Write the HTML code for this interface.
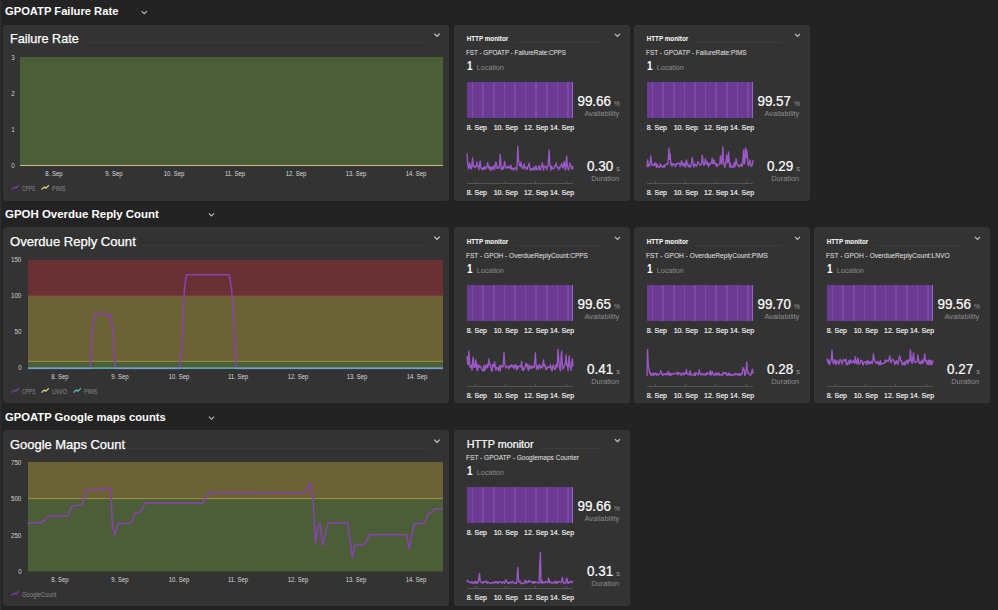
<!DOCTYPE html>
<html><head><meta charset="utf-8"><style>
html,body{margin:0;padding:0;}
body{width:998px;height:610px;overflow:hidden;background:#232323;position:relative;font-family:"Liberation Sans", sans-serif;}
.t{position:absolute;white-space:nowrap;line-height:1;}
.r{position:absolute;}
</style></head><body>
<svg class="r" style="left:0;top:0" width="4" height="610"><rect x="0" y="0" width="1.5" height="610" fill="#2d2d2d"/></svg>
<div class="t" style="left:5.00px;top:6.00px;font-size:11.2px;color:#ffffff;font-weight:700;">GPOATP Failure Rate</div>
<svg class="r" style="left:0;top:0" width="998" height="610"><polyline points="141.70,11.10 144.30,13.70 146.90,11.10" fill="none" stroke="#bdbdbd" stroke-width="1.1"/></svg>
<div class="t" style="left:5.00px;transform:scaleX(1.023);transform-origin:0 0;top:209.00px;font-size:11.2px;color:#ffffff;font-weight:700;">GPOH Overdue Reply Count</div>
<svg class="r" style="left:0;top:0" width="998" height="610"><polyline points="208.90,213.30 211.50,215.90 214.10,213.30" fill="none" stroke="#bdbdbd" stroke-width="1.1"/></svg>
<div class="t" style="left:5.00px;transform:scaleX(1.005);transform-origin:0 0;top:412.00px;font-size:11.2px;color:#ffffff;font-weight:700;">GPOATP Google maps counts</div>
<svg class="r" style="left:0;top:0" width="998" height="610"><polyline points="208.90,416.70 211.50,419.30 214.10,416.70" fill="none" stroke="#bdbdbd" stroke-width="1.1"/></svg>
<svg class="r" style="left:0;top:0" width="998" height="610"><rect x="2.8" y="24.5" width="446.5" height="176.7" rx="3.5" fill="#1e1e1e" opacity="0.6"/><rect x="3.3" y="25.0" width="445.5" height="175.7" rx="3" fill="#333333"/><rect x="3.8" y="25.5" width="444.5" height="174.7" rx="2.5" fill="none" stroke="#383838" stroke-width="1"/></svg>
<div class="t" style="left:10.30px;transform:scaleX(0.97);transform-origin:0 0;top:32.00px;font-size:13px;color:#ffffff;font-weight:400;-webkit-text-stroke:0.25px #fff;">Failure Rate</div>
<div class="r" style="left:85px;top:42px;width:343px;height:1px;background:#3b3b3b;"></div>
<svg class="r" style="left:0;top:0" width="998" height="610"><polyline points="434.30,33.65 437.00,36.35 439.70,33.65" fill="none" stroke="#cfcfcf" stroke-width="1.2"/></svg>
<svg class="r" style="left:0;top:0" width="998" height="610"><rect x="20" y="57" width="423" height="109" fill="#4b5e38"/><polyline points="20.0,165.5 443.0,165.5" fill="none" stroke="#c9bb86" stroke-width="1.0" stroke-linejoin="round"/></svg>
<div class="t" style="right:983.00px;transform:scaleX(0.92);transform-origin:100% 0;top:55.00px;font-size:6.8px;color:#cfcfcf;font-weight:400;">3</div>
<div class="t" style="right:983.00px;transform:scaleX(0.92);transform-origin:100% 0;top:91.00px;font-size:6.8px;color:#cfcfcf;font-weight:400;">2</div>
<div class="t" style="right:983.00px;transform:scaleX(0.92);transform-origin:100% 0;top:127.00px;font-size:6.8px;color:#cfcfcf;font-weight:400;">1</div>
<div class="t" style="right:983.00px;transform:scaleX(0.92);transform-origin:100% 0;top:163.00px;font-size:6.8px;color:#cfcfcf;font-weight:400;">0</div>
<div class="t" style="left:54.00px;transform:translateX(-50%) scaleX(0.88);transform-origin:50% 0;top:171.00px;font-size:6.8px;color:#d8d8d8;font-weight:400;">8. Sep</div>
<div class="t" style="left:114.00px;transform:translateX(-50%) scaleX(0.88);transform-origin:50% 0;top:171.00px;font-size:6.8px;color:#d8d8d8;font-weight:400;">9. Sep</div>
<div class="t" style="left:174.00px;transform:translateX(-50%) scaleX(0.88);transform-origin:50% 0;top:171.00px;font-size:6.8px;color:#d8d8d8;font-weight:400;">10. Sep</div>
<div class="t" style="left:235.00px;transform:translateX(-50%) scaleX(0.88);transform-origin:50% 0;top:171.00px;font-size:6.8px;color:#d8d8d8;font-weight:400;">11. Sep</div>
<div class="t" style="left:296.00px;transform:translateX(-50%) scaleX(0.88);transform-origin:50% 0;top:171.00px;font-size:6.8px;color:#d8d8d8;font-weight:400;">12. Sep</div>
<div class="t" style="left:356.00px;transform:translateX(-50%) scaleX(0.88);transform-origin:50% 0;top:171.00px;font-size:6.8px;color:#d8d8d8;font-weight:400;">13. Sep</div>
<div class="t" style="left:416.00px;transform:translateX(-50%) scaleX(0.88);transform-origin:50% 0;top:171.00px;font-size:6.8px;color:#d8d8d8;font-weight:400;">14. Sep</div>
<svg class="r" style="left:0;top:0" width="998" height="610"><polyline points="11.4,189.6 14.2,187.1 15.8,188.1 18.9,185.3" fill="none" stroke="#7d3caa" stroke-width="1.25"/></svg>
<div class="t" style="left:21.60px;transform:scaleX(0.769);transform-origin:0 0;top:186.00px;font-size:6.4px;color:#8a8a8a;font-weight:400;">CPPS</div>
<svg class="r" style="left:0;top:0" width="998" height="610"><polyline points="41.4,189.6 44.2,187.1 45.8,188.1 48.9,185.3" fill="none" stroke="#dcd07c" stroke-width="1.25"/></svg>
<div class="t" style="left:51.60px;transform:scaleX(0.869);transform-origin:0 0;top:186.00px;font-size:6.4px;color:#8a8a8a;font-weight:400;">PIMS</div>
<svg class="r" style="left:0;top:0" width="998" height="610"><rect x="2.8" y="226.9" width="446.5" height="176.7" rx="3.5" fill="#1e1e1e" opacity="0.6"/><rect x="3.3" y="227.4" width="445.5" height="175.7" rx="3" fill="#333333"/><rect x="3.8" y="227.9" width="444.5" height="174.7" rx="2.5" fill="none" stroke="#383838" stroke-width="1"/></svg>
<div class="t" style="left:10.30px;transform:scaleX(1.006);transform-origin:0 0;top:235.00px;font-size:13px;color:#ffffff;font-weight:400;-webkit-text-stroke:0.25px #fff;">Overdue Reply Count</div>
<div class="r" style="left:142px;top:245px;width:286px;height:1px;background:#3b3b3b;"></div>
<svg class="r" style="left:0;top:0" width="998" height="610"><polyline points="434.30,236.65 437.00,239.35 439.70,236.65" fill="none" stroke="#cfcfcf" stroke-width="1.2"/></svg>
<svg class="r" style="left:0;top:0" width="998" height="610"><rect x="28" y="260" width="415" height="36" fill="#6a3135"/><rect x="28" y="296" width="415" height="65" fill="#6b6336"/><rect x="28" y="361" width="415" height="7.5" fill="#4b5e38"/><polyline points="28.0,296.0 443.0,296.0" fill="none" stroke="#9a4a3a" stroke-width="0.8" stroke-linejoin="round"/><polyline points="28.0,361.3 443.0,361.3" fill="none" stroke="#a89a3c" stroke-width="0.9" stroke-linejoin="round"/><polyline points="28.0,368.4 90.2,368.4 92.2,329.8 95.3,314.0 102.6,314.0 104.6,314.8 110.1,314.8 112.5,326.8 115.0,368.4 116.4,368.4 179.4,368.4 181.9,344.5 184.3,290.4 186.3,274.7 229.0,274.7 231.5,287.5 236.4,368.4 443.0,368.4" fill="none" stroke="#8a41b2" stroke-width="1.5" stroke-linejoin="round"/><polyline points="28.0,368.2 443.0,368.2" fill="none" stroke="#62c6cc" stroke-width="1.3" stroke-linejoin="round"/></svg>
<div class="t" style="right:976.60px;transform:scaleX(0.92);transform-origin:100% 0;top:257.00px;font-size:6.8px;color:#cfcfcf;font-weight:400;">150</div>
<div class="t" style="right:976.60px;transform:scaleX(0.92);transform-origin:100% 0;top:293.00px;font-size:6.8px;color:#cfcfcf;font-weight:400;">100</div>
<div class="t" style="right:976.60px;transform:scaleX(0.92);transform-origin:100% 0;top:329.00px;font-size:6.8px;color:#cfcfcf;font-weight:400;">50</div>
<div class="t" style="right:976.60px;transform:scaleX(0.92);transform-origin:100% 0;top:365.00px;font-size:6.8px;color:#cfcfcf;font-weight:400;">0</div>
<div class="t" style="left:60.00px;transform:translateX(-50%) scaleX(0.88);transform-origin:50% 0;top:374.00px;font-size:6.8px;color:#d8d8d8;font-weight:400;">8. Sep</div>
<div class="t" style="left:119.50px;transform:translateX(-50%) scaleX(0.88);transform-origin:50% 0;top:374.00px;font-size:6.8px;color:#d8d8d8;font-weight:400;">9. Sep</div>
<div class="t" style="left:179.00px;transform:translateX(-50%) scaleX(0.88);transform-origin:50% 0;top:374.00px;font-size:6.8px;color:#d8d8d8;font-weight:400;">10. Sep</div>
<div class="t" style="left:238.00px;transform:translateX(-50%) scaleX(0.88);transform-origin:50% 0;top:374.00px;font-size:6.8px;color:#d8d8d8;font-weight:400;">11. Sep</div>
<div class="t" style="left:297.60px;transform:translateX(-50%) scaleX(0.88);transform-origin:50% 0;top:374.00px;font-size:6.8px;color:#d8d8d8;font-weight:400;">12. Sep</div>
<div class="t" style="left:357.00px;transform:translateX(-50%) scaleX(0.88);transform-origin:50% 0;top:374.00px;font-size:6.8px;color:#d8d8d8;font-weight:400;">13. Sep</div>
<div class="t" style="left:417.00px;transform:translateX(-50%) scaleX(0.88);transform-origin:50% 0;top:374.00px;font-size:6.8px;color:#d8d8d8;font-weight:400;">14. Sep</div>
<svg class="r" style="left:0;top:0" width="998" height="610"><polyline points="11.4,392.6 14.2,390.1 15.8,391.1 18.9,388.3" fill="none" stroke="#7d3caa" stroke-width="1.25"/></svg>
<div class="t" style="left:21.60px;transform:scaleX(0.769);transform-origin:0 0;top:389.00px;font-size:6.4px;color:#8a8a8a;font-weight:400;">CPPS</div>
<svg class="r" style="left:0;top:0" width="998" height="610"><polyline points="41.4,392.6 44.2,390.1 45.8,391.1 48.9,388.3" fill="none" stroke="#dcd07c" stroke-width="1.25"/></svg>
<div class="t" style="left:51.60px;transform:scaleX(0.872);transform-origin:0 0;top:389.00px;font-size:6.4px;color:#8a8a8a;font-weight:400;">LNVO</div>
<svg class="r" style="left:0;top:0" width="998" height="610"><polyline points="73.4,392.6 76.2,390.1 77.8,391.1 80.9,388.3" fill="none" stroke="#4fc0cc" stroke-width="1.25"/></svg>
<div class="t" style="left:83.60px;transform:scaleX(0.869);transform-origin:0 0;top:389.00px;font-size:6.4px;color:#8a8a8a;font-weight:400;">PIMS</div>
<svg class="r" style="left:0;top:0" width="998" height="610"><rect x="2.8" y="429.7" width="446.5" height="176.7" rx="3.5" fill="#1e1e1e" opacity="0.6"/><rect x="3.3" y="430.2" width="445.5" height="175.7" rx="3" fill="#333333"/><rect x="3.8" y="430.7" width="444.5" height="174.7" rx="2.5" fill="none" stroke="#383838" stroke-width="1"/></svg>
<div class="t" style="left:10.30px;transform:scaleX(0.995);transform-origin:0 0;top:438.00px;font-size:13px;color:#ffffff;font-weight:400;-webkit-text-stroke:0.25px #fff;">Google Maps Count</div>
<div class="r" style="left:130px;top:448px;width:298px;height:1px;background:#3b3b3b;"></div>
<svg class="r" style="left:0;top:0" width="998" height="610"><polyline points="434.30,439.65 437.00,442.35 439.70,439.65" fill="none" stroke="#cfcfcf" stroke-width="1.2"/></svg>
<svg class="r" style="left:0;top:0" width="998" height="610"><rect x="28" y="462" width="415" height="36.69999999999999" fill="#6b6336"/><rect x="28" y="498.7" width="415" height="72.80000000000001" fill="#4b5e38"/><polyline points="28.0,498.6 443.0,498.6" fill="none" stroke="#a89a3c" stroke-width="0.9" stroke-linejoin="round"/><polyline points="27.4,523.4 32.6,522.8 41.0,522.8 44.2,520.7 48.4,516.0 68.0,516.0 70.5,508.7 73.7,505.5 81.0,504.9 83.1,503.4 85.7,491.8 88.4,489.7 102.1,489.7 105.2,488.2 110.5,488.2 112.6,527.6 115.1,535.0 117.9,523.4 129.4,523.4 132.0,521.3 135.1,512.9 140.0,512.2 145.2,503.0 203.1,503.0 204.8,499.6 209.4,492.5 305.4,492.7 308.0,486.2 310.1,482.6 312.9,498.1 315.5,542.9 317.9,526.1 320.0,523.5 322.6,545.0 328.0,523.1 337.7,523.1 347.4,522.2 352.4,557.3 354.9,545.0 364.6,544.4 369.6,534.7 406.6,534.7 409.2,549.1 414.2,523.5 423.9,523.5 428.2,513.6 431.4,512.1 434.2,508.9 442.8,508.9" fill="none" stroke="#8a41b2" stroke-width="1.5" stroke-linejoin="round"/></svg>
<div class="t" style="right:976.60px;transform:scaleX(0.92);transform-origin:100% 0;top:460.00px;font-size:6.8px;color:#cfcfcf;font-weight:400;">750</div>
<div class="t" style="right:976.60px;transform:scaleX(0.92);transform-origin:100% 0;top:496.00px;font-size:6.8px;color:#cfcfcf;font-weight:400;">500</div>
<div class="t" style="right:976.60px;transform:scaleX(0.92);transform-origin:100% 0;top:533.00px;font-size:6.8px;color:#cfcfcf;font-weight:400;">250</div>
<div class="t" style="right:976.60px;transform:scaleX(0.92);transform-origin:100% 0;top:569.00px;font-size:6.8px;color:#cfcfcf;font-weight:400;">0</div>
<div class="t" style="left:60.00px;transform:translateX(-50%) scaleX(0.88);transform-origin:50% 0;top:577.00px;font-size:6.8px;color:#d8d8d8;font-weight:400;">8. Sep</div>
<div class="t" style="left:119.50px;transform:translateX(-50%) scaleX(0.88);transform-origin:50% 0;top:577.00px;font-size:6.8px;color:#d8d8d8;font-weight:400;">9. Sep</div>
<div class="t" style="left:179.00px;transform:translateX(-50%) scaleX(0.88);transform-origin:50% 0;top:577.00px;font-size:6.8px;color:#d8d8d8;font-weight:400;">10. Sep</div>
<div class="t" style="left:238.00px;transform:translateX(-50%) scaleX(0.88);transform-origin:50% 0;top:577.00px;font-size:6.8px;color:#d8d8d8;font-weight:400;">11. Sep</div>
<div class="t" style="left:297.60px;transform:translateX(-50%) scaleX(0.88);transform-origin:50% 0;top:577.00px;font-size:6.8px;color:#d8d8d8;font-weight:400;">12. Sep</div>
<div class="t" style="left:356.00px;transform:translateX(-50%) scaleX(0.88);transform-origin:50% 0;top:577.00px;font-size:6.8px;color:#d8d8d8;font-weight:400;">13. Sep</div>
<div class="t" style="left:416.00px;transform:translateX(-50%) scaleX(0.88);transform-origin:50% 0;top:577.00px;font-size:6.8px;color:#d8d8d8;font-weight:400;">14. Sep</div>
<svg class="r" style="left:0;top:0" width="998" height="610"><polyline points="11.4,595.6 14.2,593.1 15.8,594.1 18.9,591.3" fill="none" stroke="#7d3caa" stroke-width="1.25"/></svg>
<div class="t" style="left:21.60px;transform:scaleX(0.915);transform-origin:0 0;top:592.00px;font-size:6.4px;color:#8a8a8a;font-weight:400;">GoogleCount</div>
<svg class="r" style="left:0;top:0" width="998" height="610"><rect x="453.5" y="24.5" width="177" height="176.7" rx="3.5" fill="#1e1e1e" opacity="0.6"/><rect x="454" y="25.0" width="176" height="175.7" rx="3" fill="#333333"/><rect x="454.5" y="25.5" width="175" height="174.7" rx="2.5" fill="none" stroke="#383838" stroke-width="1"/></svg>
<div class="t" style="left:466.70px;top:36.00px;font-size:6.3px;color:#ffffff;font-weight:700;">HTTP monitor</div>
<div class="r" style="left:514px;top:42px;width:89px;height:1px;background:#3c3c3c;"></div>
<svg class="r" style="left:0;top:0" width="998" height="610"><polyline points="615.00,33.95 617.50,36.45 620.00,33.95" fill="none" stroke="#c8c8c8" stroke-width="1.1"/></svg>
<div class="t" style="left:466.40px;transform:scaleX(0.899);transform-origin:0 0;top:49.00px;font-size:7.0px;color:#e6e6e6;font-weight:400;">FST - GPOATP - FailureRate:CPPS</div>
<div class="t" style="left:466.50px;transform:scaleX(0.8);transform-origin:0 0;top:60.00px;font-size:12.4px;color:#ffffff;font-weight:700;">1</div>
<div class="t" style="left:476.70px;top:64.00px;font-size:7.2px;color:#8c8c8c;font-weight:400;">Location</div>
<div class="r" style="left:467px;top:82px;width:106px;height:36px;background:#6b3a92;"></div>
<div class="r" style="left:471.8px;top:82px;width:1.5px;height:36px;background:#7b4aa3;"></div>
<div class="r" style="left:482.4px;top:82px;width:1.5px;height:36px;background:#7b4aa3;"></div>
<div class="r" style="left:493.0px;top:82px;width:1.5px;height:36px;background:#7b4aa3;"></div>
<div class="r" style="left:503.6px;top:82px;width:1.5px;height:36px;background:#7b4aa3;"></div>
<div class="r" style="left:514.2px;top:82px;width:1.5px;height:36px;background:#7b4aa3;"></div>
<div class="r" style="left:524.8px;top:82px;width:1.5px;height:36px;background:#7b4aa3;"></div>
<div class="r" style="left:535.4px;top:82px;width:1.5px;height:36px;background:#7b4aa3;"></div>
<div class="r" style="left:546.0px;top:82px;width:1.5px;height:36px;background:#7b4aa3;"></div>
<div class="r" style="left:556.6px;top:82px;width:1.5px;height:36px;background:#7b4aa3;"></div>
<div class="r" style="left:567.2px;top:82px;width:1.5px;height:36px;background:#7b4aa3;"></div>
<div class="r" style="left:571.5px;top:82px;width:1.5px;height:36px;background:#9a63c6;"></div>
<div class="t" style="right:386.60px;transform:scaleX(0.96);transform-origin:100% 0;top:94.00px;font-size:14px;color:#ffffff;font-weight:400;-webkit-text-stroke:0.2px #fff;">99.66</div>
<div class="t" style="left:613.60px;transform:scaleX(0.9);transform-origin:0 0;top:100.00px;font-size:7.4px;color:#9a9a9a;font-weight:400;">%</div>
<div class="t" style="right:378.80px;top:110.00px;font-size:7.4px;color:#8c8c8c;font-weight:400;">Availability</div>
<div class="t" style="left:466.70px;top:124.00px;font-size:7.0px;color:#f2f2f2;font-weight:400;-webkit-text-stroke:0.15px #fff;">8. Sep</div>
<div class="t" style="left:493.70px;top:124.00px;font-size:7.0px;color:#f2f2f2;font-weight:400;-webkit-text-stroke:0.15px #fff;">10. Sep</div>
<div class="t" style="left:524.10px;top:124.00px;font-size:7.0px;color:#f2f2f2;font-weight:400;-webkit-text-stroke:0.15px #fff;">12. Sep</div>
<div class="t" style="left:549.90px;top:124.00px;font-size:7.0px;color:#f2f2f2;font-weight:400;-webkit-text-stroke:0.15px #fff;">14. Sep</div>
<svg class="r" style="left:0;top:0" width="998" height="610"><polyline points="467.0,153.4 467.6,163.6 468.3,168.0 468.9,168.7 469.5,162.8 470.1,167.7 470.8,165.7 471.4,169.0 472.0,163.4 472.6,158.0 473.3,166.6 473.9,166.7 474.5,165.8 475.2,167.7 475.8,166.8 476.4,165.9 477.0,162.0 477.7,166.4 478.3,166.6 478.9,169.7 479.5,164.5 480.2,161.0 480.8,167.2 481.4,168.8 482.1,168.4 482.7,169.6 483.3,167.4 483.9,169.4 484.6,166.5 485.2,168.9 485.8,167.4 486.4,168.0 487.1,166.3 487.7,162.5 488.3,166.3 489.0,168.4 489.6,166.5 490.2,170.2 490.8,168.2 491.5,166.8 492.1,170.1 492.7,167.8 493.3,168.2 494.0,165.7 494.6,169.5 495.2,165.8 495.9,162.0 496.5,164.2 497.1,168.3 497.7,168.0 498.4,167.3 499.0,168.2 499.6,164.8 500.2,154.5 500.9,163.0 501.5,169.7 502.1,169.4 502.8,166.9 503.4,168.7 504.0,165.8 504.6,161.4 505.3,166.2 505.9,168.1 506.5,167.0 507.1,167.8 507.8,166.3 508.4,167.6 509.0,166.2 509.7,168.0 510.3,168.5 510.9,165.2 511.5,169.0 512.2,168.9 512.8,168.2 513.4,170.2 514.0,168.1 514.7,168.7 515.3,168.3 515.9,167.4 516.6,170.2 517.2,163.8 517.8,146.5 518.4,159.2 519.1,163.3 519.7,165.9 520.3,166.6 520.9,162.0 521.6,165.8 522.2,168.0 522.8,167.3 523.4,168.8 524.1,163.9 524.7,167.1 525.3,167.2 526.0,169.0 526.6,167.2 527.2,169.3 527.8,166.7 528.5,166.0 529.1,163.0 529.7,167.0 530.3,170.2 531.0,168.4 531.6,169.9 532.2,169.2 532.9,169.6 533.5,167.3 534.1,169.7 534.7,170.1 535.4,166.3 536.0,165.9 536.6,169.7 537.2,169.5 537.9,168.5 538.5,167.4 539.1,165.7 539.8,169.8 540.4,170.0 541.0,167.0 541.6,166.8 542.3,162.6 542.9,165.9 543.5,170.2 544.1,166.2 544.8,166.8 545.4,166.2 546.0,167.4 546.7,169.9 547.3,166.9 547.9,166.2 548.5,159.2 549.2,150.0 549.8,165.9 550.4,166.0 551.0,170.2 551.7,166.2 552.3,168.5 552.9,168.2 553.6,168.7 554.2,168.2 554.8,165.7 555.4,166.1 556.1,163.0 556.7,166.8 557.3,167.1 557.9,167.2 558.6,169.8 559.2,167.2 559.8,168.4 560.5,165.9 561.1,166.0 561.7,163.5 562.3,167.0 563.0,168.0 563.6,164.4 564.2,161.4 564.8,166.5 565.5,170.2 566.1,162.7 566.7,156.2 567.4,166.1 568.0,168.6 568.6,169.9 569.2,167.2 569.9,163.0 570.5,165.7 571.1,166.4 571.7,168.8 572.4,166.0 573.0,169.4" fill="none" stroke="#9c58c8" stroke-width="1.35" stroke-linejoin="round"/></svg>
<div class="r" style="left:467px;top:183px;width:106px;height:1px;background:#555555;"></div>
<div class="r" style="left:474.7px;top:181px;width:1px;height:2px;background:#555555;"></div>
<div class="r" style="left:505px;top:181px;width:1px;height:2px;background:#555555;"></div>
<div class="r" style="left:535.4px;top:181px;width:1px;height:2px;background:#555555;"></div>
<div class="r" style="left:565.8px;top:181px;width:1px;height:2px;background:#555555;"></div>
<div class="t" style="left:466.70px;top:189.00px;font-size:7.0px;color:#f2f2f2;font-weight:400;-webkit-text-stroke:0.15px #fff;">8. Sep</div>
<div class="t" style="left:493.70px;top:189.00px;font-size:7.0px;color:#f2f2f2;font-weight:400;-webkit-text-stroke:0.15px #fff;">10. Sep</div>
<div class="t" style="left:524.10px;top:189.00px;font-size:7.0px;color:#f2f2f2;font-weight:400;-webkit-text-stroke:0.15px #fff;">12. Sep</div>
<div class="t" style="left:549.90px;top:189.00px;font-size:7.0px;color:#f2f2f2;font-weight:400;-webkit-text-stroke:0.15px #fff;">14. Sep</div>
<div class="t" style="right:384.60px;transform:scaleX(0.96);transform-origin:100% 0;top:159.00px;font-size:14px;color:#ffffff;font-weight:400;-webkit-text-stroke:0.2px #fff;">0.30</div>
<div class="t" style="left:616.30px;top:165.00px;font-size:7.4px;color:#9a9a9a;font-weight:400;">s</div>
<div class="t" style="right:378.80px;top:175.00px;font-size:7.4px;color:#8c8c8c;font-weight:400;">Duration</div>
<svg class="r" style="left:0;top:0" width="998" height="610"><rect x="633.5" y="24.5" width="177" height="176.7" rx="3.5" fill="#1e1e1e" opacity="0.6"/><rect x="634" y="25.0" width="176" height="175.7" rx="3" fill="#333333"/><rect x="634.5" y="25.5" width="175" height="174.7" rx="2.5" fill="none" stroke="#383838" stroke-width="1"/></svg>
<div class="t" style="left:646.70px;top:36.00px;font-size:6.3px;color:#ffffff;font-weight:700;">HTTP monitor</div>
<div class="r" style="left:694px;top:42px;width:89px;height:1px;background:#3c3c3c;"></div>
<svg class="r" style="left:0;top:0" width="998" height="610"><polyline points="795.00,33.95 797.50,36.45 800.00,33.95" fill="none" stroke="#c8c8c8" stroke-width="1.1"/></svg>
<div class="t" style="left:646.40px;transform:scaleX(0.921);transform-origin:0 0;top:49.00px;font-size:7.0px;color:#e6e6e6;font-weight:400;">FST - GPOATP - FailureRate:PIMS</div>
<div class="t" style="left:646.50px;transform:scaleX(0.8);transform-origin:0 0;top:60.00px;font-size:12.4px;color:#ffffff;font-weight:700;">1</div>
<div class="t" style="left:656.70px;top:64.00px;font-size:7.2px;color:#8c8c8c;font-weight:400;">Location</div>
<div class="r" style="left:647px;top:82px;width:106px;height:36px;background:#6b3a92;"></div>
<div class="r" style="left:651.8px;top:82px;width:1.5px;height:36px;background:#7b4aa3;"></div>
<div class="r" style="left:662.4px;top:82px;width:1.5px;height:36px;background:#7b4aa3;"></div>
<div class="r" style="left:673.0px;top:82px;width:1.5px;height:36px;background:#7b4aa3;"></div>
<div class="r" style="left:683.6px;top:82px;width:1.5px;height:36px;background:#7b4aa3;"></div>
<div class="r" style="left:694.2px;top:82px;width:1.5px;height:36px;background:#7b4aa3;"></div>
<div class="r" style="left:704.8px;top:82px;width:1.5px;height:36px;background:#7b4aa3;"></div>
<div class="r" style="left:715.4px;top:82px;width:1.5px;height:36px;background:#7b4aa3;"></div>
<div class="r" style="left:726.0px;top:82px;width:1.5px;height:36px;background:#7b4aa3;"></div>
<div class="r" style="left:736.6px;top:82px;width:1.5px;height:36px;background:#7b4aa3;"></div>
<div class="r" style="left:747.2px;top:82px;width:1.5px;height:36px;background:#7b4aa3;"></div>
<div class="r" style="left:751.5px;top:82px;width:1.5px;height:36px;background:#9a63c6;"></div>
<div class="t" style="right:206.60px;transform:scaleX(0.96);transform-origin:100% 0;top:94.00px;font-size:14px;color:#ffffff;font-weight:400;-webkit-text-stroke:0.2px #fff;">99.57</div>
<div class="t" style="left:793.60px;transform:scaleX(0.9);transform-origin:0 0;top:100.00px;font-size:7.4px;color:#9a9a9a;font-weight:400;">%</div>
<div class="t" style="right:198.80px;top:110.00px;font-size:7.4px;color:#8c8c8c;font-weight:400;">Availability</div>
<div class="t" style="left:646.70px;top:124.00px;font-size:7.0px;color:#f2f2f2;font-weight:400;-webkit-text-stroke:0.15px #fff;">8. Sep</div>
<div class="t" style="left:673.70px;top:124.00px;font-size:7.0px;color:#f2f2f2;font-weight:400;-webkit-text-stroke:0.15px #fff;">10. Sep</div>
<div class="t" style="left:704.10px;top:124.00px;font-size:7.0px;color:#f2f2f2;font-weight:400;-webkit-text-stroke:0.15px #fff;">12. Sep</div>
<div class="t" style="left:729.90px;top:124.00px;font-size:7.0px;color:#f2f2f2;font-weight:400;-webkit-text-stroke:0.15px #fff;">14. Sep</div>
<svg class="r" style="left:0;top:0" width="998" height="610"><polyline points="647.0,167.3 647.6,160.0 648.3,166.3 648.9,164.5 649.5,165.8 650.1,162.9 650.8,156.0 651.4,162.1 652.0,165.5 652.6,164.2 653.3,165.1 653.9,164.8 654.5,165.4 655.2,162.8 655.8,163.7 656.4,167.5 657.0,163.9 657.7,166.6 658.3,167.1 658.9,166.6 659.5,167.4 660.2,163.8 660.8,166.2 661.4,165.4 662.1,167.2 662.7,166.8 663.3,167.0 663.9,165.1 664.6,167.1 665.2,165.2 665.8,164.5 666.4,163.8 667.1,164.3 667.7,164.5 668.3,159.1 669.0,148.2 669.6,159.3 670.2,154.0 670.8,164.5 671.5,163.4 672.1,166.3 672.7,163.9 673.3,163.4 674.0,164.3 674.6,164.9 675.2,166.9 675.9,164.0 676.5,165.0 677.1,163.2 677.7,163.9 678.4,163.5 679.0,163.2 679.6,163.2 680.2,166.7 680.9,163.9 681.5,160.8 682.1,162.4 682.8,165.8 683.4,163.6 684.0,163.2 684.6,166.5 685.3,167.1 685.9,162.4 686.5,160.0 687.1,165.0 687.8,163.5 688.4,166.9 689.0,165.7 689.7,165.4 690.3,167.3 690.9,165.8 691.5,163.2 692.2,157.6 692.8,161.3 693.4,165.3 694.0,167.2 694.7,164.1 695.3,164.2 695.9,165.8 696.6,166.2 697.2,165.0 697.8,161.5 698.4,163.6 699.1,163.4 699.7,164.1 700.3,165.4 700.9,164.5 701.6,164.0 702.2,155.3 702.8,158.9 703.4,164.0 704.1,165.4 704.7,163.5 705.3,159.0 706.0,162.2 706.6,164.4 707.2,162.0 707.8,163.5 708.5,166.8 709.1,163.2 709.7,164.9 710.3,164.0 711.0,163.4 711.6,162.0 712.2,158.0 712.9,163.9 713.5,163.0 714.1,160.0 714.7,163.6 715.4,163.5 716.0,165.9 716.6,163.5 717.2,166.5 717.9,165.3 718.5,165.1 719.1,164.3 719.8,163.7 720.4,156.0 721.0,161.3 721.6,164.1 722.3,155.8 722.9,147.0 723.5,163.7 724.1,163.5 724.8,167.5 725.4,164.6 726.0,161.5 726.7,155.0 727.3,162.8 727.9,162.2 728.5,152.0 729.2,160.4 729.8,167.3 730.4,163.5 731.0,166.2 731.7,167.0 732.3,166.2 732.9,167.5 733.6,165.6 734.2,162.7 734.8,167.0 735.4,164.3 736.1,158.8 736.7,162.4 737.3,165.2 737.9,164.6 738.6,166.0 739.2,166.8 739.8,165.8 740.5,166.0 741.1,164.0 741.7,166.2 742.3,166.0 743.0,157.4 743.6,150.0 744.2,163.9 744.8,162.5 745.5,148.0 746.1,157.6 746.7,150.0 747.4,156.0 748.0,165.0 748.6,165.6 749.2,164.0 749.9,160.0 750.5,162.9 751.1,166.4 751.7,166.1 752.4,164.3 753.0,160.2" fill="none" stroke="#9c58c8" stroke-width="1.35" stroke-linejoin="round"/></svg>
<div class="r" style="left:647px;top:183px;width:106px;height:1px;background:#555555;"></div>
<div class="r" style="left:654.7px;top:181px;width:1px;height:2px;background:#555555;"></div>
<div class="r" style="left:685px;top:181px;width:1px;height:2px;background:#555555;"></div>
<div class="r" style="left:715.4px;top:181px;width:1px;height:2px;background:#555555;"></div>
<div class="r" style="left:745.8px;top:181px;width:1px;height:2px;background:#555555;"></div>
<div class="t" style="left:646.70px;top:189.00px;font-size:7.0px;color:#f2f2f2;font-weight:400;-webkit-text-stroke:0.15px #fff;">8. Sep</div>
<div class="t" style="left:673.70px;top:189.00px;font-size:7.0px;color:#f2f2f2;font-weight:400;-webkit-text-stroke:0.15px #fff;">10. Sep</div>
<div class="t" style="left:704.10px;top:189.00px;font-size:7.0px;color:#f2f2f2;font-weight:400;-webkit-text-stroke:0.15px #fff;">12. Sep</div>
<div class="t" style="left:729.90px;top:189.00px;font-size:7.0px;color:#f2f2f2;font-weight:400;-webkit-text-stroke:0.15px #fff;">14. Sep</div>
<div class="t" style="right:204.60px;transform:scaleX(0.96);transform-origin:100% 0;top:159.00px;font-size:14px;color:#ffffff;font-weight:400;-webkit-text-stroke:0.2px #fff;">0.29</div>
<div class="t" style="left:796.30px;top:165.00px;font-size:7.4px;color:#9a9a9a;font-weight:400;">s</div>
<div class="t" style="right:198.80px;top:175.00px;font-size:7.4px;color:#8c8c8c;font-weight:400;">Duration</div>
<svg class="r" style="left:0;top:0" width="998" height="610"><rect x="453.5" y="226.9" width="177" height="176.7" rx="3.5" fill="#1e1e1e" opacity="0.6"/><rect x="454" y="227.4" width="176" height="175.7" rx="3" fill="#333333"/><rect x="454.5" y="227.9" width="175" height="174.7" rx="2.5" fill="none" stroke="#383838" stroke-width="1"/></svg>
<div class="t" style="left:466.70px;top:239.00px;font-size:6.3px;color:#ffffff;font-weight:700;">HTTP monitor</div>
<div class="r" style="left:514px;top:245px;width:89px;height:1px;background:#3c3c3c;"></div>
<svg class="r" style="left:0;top:0" width="998" height="610"><polyline points="615.00,236.95 617.50,239.45 620.00,236.95" fill="none" stroke="#c8c8c8" stroke-width="1.1"/></svg>
<div class="t" style="left:466.40px;transform:scaleX(0.934);transform-origin:0 0;top:252.00px;font-size:7.0px;color:#e6e6e6;font-weight:400;">FST - GPOH - OverdueReplyCount:CPPS</div>
<div class="t" style="left:466.50px;transform:scaleX(0.8);transform-origin:0 0;top:263.00px;font-size:12.4px;color:#ffffff;font-weight:700;">1</div>
<div class="t" style="left:476.70px;top:267.00px;font-size:7.2px;color:#8c8c8c;font-weight:400;">Location</div>
<div class="r" style="left:467px;top:285px;width:106px;height:36px;background:#6b3a92;"></div>
<div class="r" style="left:471.8px;top:285px;width:1.5px;height:36px;background:#7b4aa3;"></div>
<div class="r" style="left:482.4px;top:285px;width:1.5px;height:36px;background:#7b4aa3;"></div>
<div class="r" style="left:493.0px;top:285px;width:1.5px;height:36px;background:#7b4aa3;"></div>
<div class="r" style="left:503.6px;top:285px;width:1.5px;height:36px;background:#7b4aa3;"></div>
<div class="r" style="left:514.2px;top:285px;width:1.5px;height:36px;background:#7b4aa3;"></div>
<div class="r" style="left:524.8px;top:285px;width:1.5px;height:36px;background:#7b4aa3;"></div>
<div class="r" style="left:535.4px;top:285px;width:1.5px;height:36px;background:#7b4aa3;"></div>
<div class="r" style="left:546.0px;top:285px;width:1.5px;height:36px;background:#7b4aa3;"></div>
<div class="r" style="left:556.6px;top:285px;width:1.5px;height:36px;background:#7b4aa3;"></div>
<div class="r" style="left:567.2px;top:285px;width:1.5px;height:36px;background:#7b4aa3;"></div>
<div class="r" style="left:571.5px;top:285px;width:1.5px;height:36px;background:#9a63c6;"></div>
<div class="t" style="right:386.60px;transform:scaleX(0.96);transform-origin:100% 0;top:297.00px;font-size:14px;color:#ffffff;font-weight:400;-webkit-text-stroke:0.2px #fff;">99.65</div>
<div class="t" style="left:613.60px;transform:scaleX(0.9);transform-origin:0 0;top:303.00px;font-size:7.4px;color:#9a9a9a;font-weight:400;">%</div>
<div class="t" style="right:378.80px;top:313.00px;font-size:7.4px;color:#8c8c8c;font-weight:400;">Availability</div>
<div class="t" style="left:466.70px;top:327.00px;font-size:7.0px;color:#f2f2f2;font-weight:400;-webkit-text-stroke:0.15px #fff;">8. Sep</div>
<div class="t" style="left:493.70px;top:327.00px;font-size:7.0px;color:#f2f2f2;font-weight:400;-webkit-text-stroke:0.15px #fff;">10. Sep</div>
<div class="t" style="left:524.10px;top:327.00px;font-size:7.0px;color:#f2f2f2;font-weight:400;-webkit-text-stroke:0.15px #fff;">12. Sep</div>
<div class="t" style="left:549.90px;top:327.00px;font-size:7.0px;color:#f2f2f2;font-weight:400;-webkit-text-stroke:0.15px #fff;">14. Sep</div>
<svg class="r" style="left:0;top:0" width="998" height="610"><polyline points="467.0,356.0 467.6,364.0 468.3,364.7 468.9,351.0 469.5,360.3 470.1,367.3 470.8,367.3 471.4,365.1 472.0,370.1 472.6,361.1 473.3,357.0 473.9,367.5 474.5,364.2 475.2,367.1 475.8,360.0 476.4,363.4 477.0,369.6 477.7,370.5 478.3,364.7 478.9,365.5 479.5,367.1 480.2,366.1 480.8,366.7 481.4,368.1 482.1,370.3 482.7,370.5 483.3,370.9 483.9,365.1 484.6,370.8 485.2,368.0 485.8,365.5 486.4,368.0 487.1,364.4 487.7,367.7 488.3,365.4 489.0,359.0 489.6,364.5 490.2,364.3 490.8,366.3 491.5,370.9 492.1,371.0 492.7,364.5 493.3,364.2 494.0,366.9 494.6,361.6 495.2,366.2 495.9,370.3 496.5,367.2 497.1,368.5 497.7,367.9 498.4,370.6 499.0,367.0 499.6,365.7 500.2,370.8 500.9,366.2 501.5,365.6 502.1,365.9 502.8,367.3 503.4,362.9 504.0,352.6 504.6,363.1 505.3,365.8 505.9,368.1 506.5,366.5 507.1,366.6 507.8,366.1 508.4,367.1 509.0,369.1 509.7,365.6 510.3,365.7 510.9,367.0 511.5,364.7 512.2,366.3 512.8,367.1 513.4,365.2 514.0,368.6 514.7,367.2 515.3,364.8 515.9,365.3 516.6,369.9 517.2,366.0 517.8,368.5 518.4,366.4 519.1,366.0 519.7,365.9 520.3,366.9 520.9,366.9 521.6,361.3 522.2,370.2 522.8,367.0 523.4,370.5 524.1,369.2 524.7,368.6 525.3,366.0 526.0,363.2 526.6,366.0 527.2,364.3 527.8,368.9 528.5,370.3 529.1,365.1 529.7,365.2 530.3,368.6 531.0,366.9 531.6,368.3 532.2,365.8 532.9,367.3 533.5,366.5 534.1,367.7 534.7,362.0 535.4,353.0 536.0,364.2 536.6,369.0 537.2,365.9 537.9,367.0 538.5,369.2 539.1,364.9 539.8,364.5 540.4,368.0 541.0,366.2 541.6,366.5 542.3,368.1 542.9,364.2 543.5,360.0 544.1,366.2 544.8,364.6 545.4,366.6 546.0,369.5 546.7,369.6 547.3,367.0 547.9,367.5 548.5,366.9 549.2,367.2 549.8,367.8 550.4,364.5 551.0,367.0 551.7,370.6 552.3,370.3 552.9,365.8 553.6,364.9 554.2,368.6 554.8,369.5 555.4,369.1 556.1,364.7 556.7,364.0 557.3,367.1 557.9,349.5 558.6,357.0 559.2,364.8 559.8,368.7 560.5,370.7 561.1,356.8 561.7,351.0 562.3,364.7 563.0,369.2 563.6,367.9 564.2,365.7 564.8,365.7 565.5,362.3 566.1,355.0 566.7,365.1 567.4,364.6 568.0,370.8 568.6,361.0 569.2,356.0 569.9,367.0 570.5,367.4 571.1,370.3 571.7,363.3 572.4,359.0 573.0,366.6" fill="none" stroke="#9c58c8" stroke-width="1.35" stroke-linejoin="round"/></svg>
<div class="r" style="left:467px;top:386px;width:106px;height:1px;background:#555555;"></div>
<div class="r" style="left:474.7px;top:384px;width:1px;height:2px;background:#555555;"></div>
<div class="r" style="left:505px;top:384px;width:1px;height:2px;background:#555555;"></div>
<div class="r" style="left:535.4px;top:384px;width:1px;height:2px;background:#555555;"></div>
<div class="r" style="left:565.8px;top:384px;width:1px;height:2px;background:#555555;"></div>
<div class="t" style="left:466.70px;top:392.00px;font-size:7.0px;color:#f2f2f2;font-weight:400;-webkit-text-stroke:0.15px #fff;">8. Sep</div>
<div class="t" style="left:493.70px;top:392.00px;font-size:7.0px;color:#f2f2f2;font-weight:400;-webkit-text-stroke:0.15px #fff;">10. Sep</div>
<div class="t" style="left:524.10px;top:392.00px;font-size:7.0px;color:#f2f2f2;font-weight:400;-webkit-text-stroke:0.15px #fff;">12. Sep</div>
<div class="t" style="left:549.90px;top:392.00px;font-size:7.0px;color:#f2f2f2;font-weight:400;-webkit-text-stroke:0.15px #fff;">14. Sep</div>
<div class="t" style="right:384.60px;transform:scaleX(0.96);transform-origin:100% 0;top:362.00px;font-size:14px;color:#ffffff;font-weight:400;-webkit-text-stroke:0.2px #fff;">0.41</div>
<div class="t" style="left:616.30px;top:368.00px;font-size:7.4px;color:#9a9a9a;font-weight:400;">s</div>
<div class="t" style="right:378.80px;top:378.00px;font-size:7.4px;color:#8c8c8c;font-weight:400;">Duration</div>
<svg class="r" style="left:0;top:0" width="998" height="610"><rect x="633.5" y="226.9" width="177" height="176.7" rx="3.5" fill="#1e1e1e" opacity="0.6"/><rect x="634" y="227.4" width="176" height="175.7" rx="3" fill="#333333"/><rect x="634.5" y="227.9" width="175" height="174.7" rx="2.5" fill="none" stroke="#383838" stroke-width="1"/></svg>
<div class="t" style="left:646.70px;top:239.00px;font-size:6.3px;color:#ffffff;font-weight:700;">HTTP monitor</div>
<div class="r" style="left:694px;top:245px;width:89px;height:1px;background:#3c3c3c;"></div>
<svg class="r" style="left:0;top:0" width="998" height="610"><polyline points="795.00,236.95 797.50,239.45 800.00,236.95" fill="none" stroke="#c8c8c8" stroke-width="1.1"/></svg>
<div class="t" style="left:646.40px;transform:scaleX(0.948);transform-origin:0 0;top:252.00px;font-size:7.0px;color:#e6e6e6;font-weight:400;">FST - GPOH - OverdueReplyCount:PIMS</div>
<div class="t" style="left:646.50px;transform:scaleX(0.8);transform-origin:0 0;top:263.00px;font-size:12.4px;color:#ffffff;font-weight:700;">1</div>
<div class="t" style="left:656.70px;top:267.00px;font-size:7.2px;color:#8c8c8c;font-weight:400;">Location</div>
<div class="r" style="left:647px;top:285px;width:106px;height:36px;background:#6b3a92;"></div>
<div class="r" style="left:651.8px;top:285px;width:1.5px;height:36px;background:#7b4aa3;"></div>
<div class="r" style="left:662.4px;top:285px;width:1.5px;height:36px;background:#7b4aa3;"></div>
<div class="r" style="left:673.0px;top:285px;width:1.5px;height:36px;background:#7b4aa3;"></div>
<div class="r" style="left:683.6px;top:285px;width:1.5px;height:36px;background:#7b4aa3;"></div>
<div class="r" style="left:694.2px;top:285px;width:1.5px;height:36px;background:#7b4aa3;"></div>
<div class="r" style="left:704.8px;top:285px;width:1.5px;height:36px;background:#7b4aa3;"></div>
<div class="r" style="left:715.4px;top:285px;width:1.5px;height:36px;background:#7b4aa3;"></div>
<div class="r" style="left:726.0px;top:285px;width:1.5px;height:36px;background:#7b4aa3;"></div>
<div class="r" style="left:736.6px;top:285px;width:1.5px;height:36px;background:#7b4aa3;"></div>
<div class="r" style="left:747.2px;top:285px;width:1.5px;height:36px;background:#7b4aa3;"></div>
<div class="r" style="left:751.5px;top:285px;width:1.5px;height:36px;background:#9a63c6;"></div>
<div class="t" style="right:206.60px;transform:scaleX(0.96);transform-origin:100% 0;top:297.00px;font-size:14px;color:#ffffff;font-weight:400;-webkit-text-stroke:0.2px #fff;">99.70</div>
<div class="t" style="left:793.60px;transform:scaleX(0.9);transform-origin:0 0;top:303.00px;font-size:7.4px;color:#9a9a9a;font-weight:400;">%</div>
<div class="t" style="right:198.80px;top:313.00px;font-size:7.4px;color:#8c8c8c;font-weight:400;">Availability</div>
<div class="t" style="left:646.70px;top:327.00px;font-size:7.0px;color:#f2f2f2;font-weight:400;-webkit-text-stroke:0.15px #fff;">8. Sep</div>
<div class="t" style="left:673.70px;top:327.00px;font-size:7.0px;color:#f2f2f2;font-weight:400;-webkit-text-stroke:0.15px #fff;">10. Sep</div>
<div class="t" style="left:704.10px;top:327.00px;font-size:7.0px;color:#f2f2f2;font-weight:400;-webkit-text-stroke:0.15px #fff;">12. Sep</div>
<div class="t" style="left:729.90px;top:327.00px;font-size:7.0px;color:#f2f2f2;font-weight:400;-webkit-text-stroke:0.15px #fff;">14. Sep</div>
<svg class="r" style="left:0;top:0" width="998" height="610"><polyline points="647.0,376.0 647.6,349.4 648.3,367.4 648.9,368.0 649.5,372.9 650.1,372.4 650.8,375.4 651.4,375.1 652.0,373.3 652.6,374.6 653.3,375.2 653.9,373.0 654.5,374.7 655.2,373.3 655.8,373.1 656.4,375.2 657.0,373.6 657.7,374.4 658.3,375.2 658.9,374.0 659.5,374.0 660.2,373.7 660.8,370.4 661.4,373.6 662.1,374.1 662.7,375.6 663.3,374.0 663.9,374.6 664.6,373.8 665.2,373.7 665.8,375.1 666.4,373.4 667.1,374.5 667.7,373.7 668.3,371.3 669.0,375.3 669.6,374.9 670.2,372.9 670.8,375.5 671.5,373.9 672.1,374.5 672.7,373.6 673.3,374.0 674.0,373.9 674.6,373.5 675.2,373.3 675.9,373.8 676.5,373.1 677.1,374.0 677.7,372.3 678.4,374.7 679.0,372.9 679.6,373.5 680.2,373.1 680.9,375.0 681.5,375.6 682.1,373.5 682.8,372.9 683.4,373.5 684.0,375.1 684.6,372.9 685.3,373.5 685.9,373.4 686.5,369.5 687.1,374.4 687.8,373.9 688.4,374.6 689.0,374.9 689.7,372.2 690.3,371.0 690.9,375.4 691.5,374.6 692.2,374.6 692.8,374.3 693.4,374.7 694.0,375.4 694.7,373.0 695.3,375.5 695.9,372.9 696.6,373.2 697.2,374.0 697.8,374.6 698.4,374.9 699.1,369.7 699.7,372.8 700.3,373.1 700.9,375.0 701.6,374.3 702.2,373.4 702.8,373.7 703.4,375.0 704.1,374.1 704.7,374.5 705.3,375.2 706.0,373.2 706.6,374.9 707.2,372.8 707.8,372.9 708.5,373.9 709.1,373.7 709.7,374.2 710.3,370.6 711.0,375.3 711.6,374.0 712.2,371.4 712.9,373.3 713.5,375.1 714.1,375.0 714.7,375.2 715.4,373.2 716.0,373.7 716.6,375.3 717.2,372.8 717.9,374.3 718.5,374.8 719.1,373.0 719.8,375.2 720.4,374.9 721.0,374.6 721.6,374.5 722.3,375.4 722.9,373.2 723.5,372.0 724.1,373.8 724.8,373.2 725.4,373.8 726.0,372.6 726.7,375.1 727.3,375.3 727.9,374.4 728.5,372.9 729.2,375.4 729.8,374.6 730.4,373.6 731.0,375.5 731.7,375.0 732.3,375.5 732.9,374.4 733.6,374.4 734.2,374.9 734.8,373.1 735.4,374.7 736.1,374.5 736.7,373.6 737.3,373.9 737.9,375.3 738.6,373.7 739.2,373.7 739.8,375.6 740.5,373.9 741.1,375.1 741.7,373.2 742.3,373.9 743.0,367.5 743.6,370.4 744.2,369.3 744.8,375.6 745.5,374.5 746.1,371.5 746.7,362.0 747.4,369.5 748.0,373.2 748.6,373.6 749.2,373.3 749.9,374.7 750.5,375.5 751.1,374.3 751.7,371.8 752.4,369.2 753.0,373.6" fill="none" stroke="#9c58c8" stroke-width="1.35" stroke-linejoin="round"/></svg>
<div class="r" style="left:647px;top:386px;width:106px;height:1px;background:#555555;"></div>
<div class="r" style="left:654.7px;top:384px;width:1px;height:2px;background:#555555;"></div>
<div class="r" style="left:685px;top:384px;width:1px;height:2px;background:#555555;"></div>
<div class="r" style="left:715.4px;top:384px;width:1px;height:2px;background:#555555;"></div>
<div class="r" style="left:745.8px;top:384px;width:1px;height:2px;background:#555555;"></div>
<div class="t" style="left:646.70px;top:392.00px;font-size:7.0px;color:#f2f2f2;font-weight:400;-webkit-text-stroke:0.15px #fff;">8. Sep</div>
<div class="t" style="left:673.70px;top:392.00px;font-size:7.0px;color:#f2f2f2;font-weight:400;-webkit-text-stroke:0.15px #fff;">10. Sep</div>
<div class="t" style="left:704.10px;top:392.00px;font-size:7.0px;color:#f2f2f2;font-weight:400;-webkit-text-stroke:0.15px #fff;">12. Sep</div>
<div class="t" style="left:729.90px;top:392.00px;font-size:7.0px;color:#f2f2f2;font-weight:400;-webkit-text-stroke:0.15px #fff;">14. Sep</div>
<div class="t" style="right:204.60px;transform:scaleX(0.96);transform-origin:100% 0;top:362.00px;font-size:14px;color:#ffffff;font-weight:400;-webkit-text-stroke:0.2px #fff;">0.28</div>
<div class="t" style="left:796.30px;top:368.00px;font-size:7.4px;color:#9a9a9a;font-weight:400;">s</div>
<div class="t" style="right:198.80px;top:378.00px;font-size:7.4px;color:#8c8c8c;font-weight:400;">Duration</div>
<svg class="r" style="left:0;top:0" width="998" height="610"><rect x="813.5" y="226.9" width="177" height="176.7" rx="3.5" fill="#1e1e1e" opacity="0.6"/><rect x="814" y="227.4" width="176" height="175.7" rx="3" fill="#333333"/><rect x="814.5" y="227.9" width="175" height="174.7" rx="2.5" fill="none" stroke="#383838" stroke-width="1"/></svg>
<div class="t" style="left:826.70px;top:239.00px;font-size:6.3px;color:#ffffff;font-weight:700;">HTTP monitor</div>
<div class="r" style="left:874px;top:245px;width:89px;height:1px;background:#3c3c3c;"></div>
<svg class="r" style="left:0;top:0" width="998" height="610"><polyline points="975.00,236.95 977.50,239.45 980.00,236.95" fill="none" stroke="#c8c8c8" stroke-width="1.1"/></svg>
<div class="t" style="left:826.40px;transform:scaleX(0.946);transform-origin:0 0;top:252.00px;font-size:7.0px;color:#e6e6e6;font-weight:400;">FST - GPOH - OverdueReplyCount:LNVO</div>
<div class="t" style="left:826.50px;transform:scaleX(0.8);transform-origin:0 0;top:263.00px;font-size:12.4px;color:#ffffff;font-weight:700;">1</div>
<div class="t" style="left:836.70px;top:267.00px;font-size:7.2px;color:#8c8c8c;font-weight:400;">Location</div>
<div class="r" style="left:827px;top:285px;width:106px;height:36px;background:#6b3a92;"></div>
<div class="r" style="left:831.8px;top:285px;width:1.5px;height:36px;background:#7b4aa3;"></div>
<div class="r" style="left:842.4px;top:285px;width:1.5px;height:36px;background:#7b4aa3;"></div>
<div class="r" style="left:853.0px;top:285px;width:1.5px;height:36px;background:#7b4aa3;"></div>
<div class="r" style="left:863.6px;top:285px;width:1.5px;height:36px;background:#7b4aa3;"></div>
<div class="r" style="left:874.2px;top:285px;width:1.5px;height:36px;background:#7b4aa3;"></div>
<div class="r" style="left:884.8px;top:285px;width:1.5px;height:36px;background:#7b4aa3;"></div>
<div class="r" style="left:895.4px;top:285px;width:1.5px;height:36px;background:#7b4aa3;"></div>
<div class="r" style="left:906.0px;top:285px;width:1.5px;height:36px;background:#7b4aa3;"></div>
<div class="r" style="left:916.6px;top:285px;width:1.5px;height:36px;background:#7b4aa3;"></div>
<div class="r" style="left:927.2px;top:285px;width:1.5px;height:36px;background:#7b4aa3;"></div>
<div class="r" style="left:931.5px;top:285px;width:1.5px;height:36px;background:#9a63c6;"></div>
<div class="t" style="right:26.60px;transform:scaleX(0.96);transform-origin:100% 0;top:297.00px;font-size:14px;color:#ffffff;font-weight:400;-webkit-text-stroke:0.2px #fff;">99.56</div>
<div class="t" style="left:973.60px;transform:scaleX(0.9);transform-origin:0 0;top:303.00px;font-size:7.4px;color:#9a9a9a;font-weight:400;">%</div>
<div class="t" style="right:18.80px;top:313.00px;font-size:7.4px;color:#8c8c8c;font-weight:400;">Availability</div>
<div class="t" style="left:826.70px;top:327.00px;font-size:7.0px;color:#f2f2f2;font-weight:400;-webkit-text-stroke:0.15px #fff;">8. Sep</div>
<div class="t" style="left:853.70px;top:327.00px;font-size:7.0px;color:#f2f2f2;font-weight:400;-webkit-text-stroke:0.15px #fff;">10. Sep</div>
<div class="t" style="left:884.10px;top:327.00px;font-size:7.0px;color:#f2f2f2;font-weight:400;-webkit-text-stroke:0.15px #fff;">12. Sep</div>
<div class="t" style="left:909.90px;top:327.00px;font-size:7.0px;color:#f2f2f2;font-weight:400;-webkit-text-stroke:0.15px #fff;">14. Sep</div>
<svg class="r" style="left:0;top:0" width="998" height="610"><polyline points="827.0,358.4 827.6,361.1 828.3,363.5 828.9,359.9 829.5,364.6 830.1,362.5 830.8,361.0 831.4,358.4 832.0,350.3 832.6,358.9 833.3,363.8 833.9,362.9 834.5,359.7 835.2,360.8 835.8,364.8 836.4,361.2 837.0,362.5 837.7,360.8 838.3,363.3 838.9,364.3 839.5,361.6 840.2,359.3 840.8,360.1 841.4,361.5 842.1,364.0 842.7,361.3 843.3,359.5 843.9,359.8 844.6,360.9 845.2,361.6 845.8,359.0 846.4,364.7 847.1,363.6 847.7,364.6 848.3,361.5 849.0,360.7 849.6,363.8 850.2,359.9 850.8,360.2 851.5,362.9 852.1,361.5 852.7,362.5 853.3,361.3 854.0,360.1 854.6,363.3 855.2,356.6 855.9,362.5 856.5,360.9 857.1,364.0 857.7,358.2 858.4,359.9 859.0,364.1 859.6,363.5 860.2,363.0 860.9,360.3 861.5,360.5 862.1,361.2 862.8,364.9 863.4,364.8 864.0,362.2 864.6,362.2 865.3,361.8 865.9,361.7 866.5,364.7 867.1,362.3 867.8,360.2 868.4,363.8 869.0,361.6 869.7,363.7 870.3,363.2 870.9,361.6 871.5,361.2 872.2,363.7 872.8,361.2 873.4,353.7 874.0,357.9 874.7,361.0 875.3,362.1 875.9,363.1 876.6,361.5 877.2,363.5 877.8,361.5 878.4,364.2 879.1,364.8 879.7,362.4 880.3,360.6 880.9,364.6 881.6,363.3 882.2,363.5 882.8,363.8 883.4,363.2 884.1,362.9 884.7,363.0 885.3,359.8 886.0,362.0 886.6,360.8 887.2,361.1 887.8,360.3 888.5,361.4 889.1,358.8 889.7,356.0 890.3,358.4 891.0,362.8 891.6,361.1 892.2,360.3 892.9,359.2 893.5,360.2 894.1,361.5 894.7,364.7 895.4,361.9 896.0,363.0 896.6,360.4 897.2,362.6 897.9,364.7 898.5,361.5 899.1,357.4 899.8,356.0 900.4,358.7 901.0,361.7 901.6,360.9 902.3,364.8 902.9,364.7 903.5,362.8 904.1,364.8 904.8,361.9 905.4,364.8 906.0,361.2 906.7,360.3 907.3,362.0 907.9,363.8 908.5,359.8 909.2,361.1 909.8,361.0 910.4,349.6 911.0,355.9 911.7,362.9 912.3,363.1 912.9,356.8 913.6,353.0 914.2,361.4 914.8,362.5 915.4,361.6 916.1,361.8 916.7,362.1 917.3,360.5 917.9,355.0 918.6,359.7 919.2,363.4 919.8,362.2 920.5,361.7 921.1,364.1 921.7,361.2 922.3,360.0 923.0,363.3 923.6,361.2 924.2,358.4 924.8,354.0 925.5,361.1 926.1,360.5 926.7,363.0 927.4,364.0 928.0,360.3 928.6,364.8 929.2,360.0 929.9,360.8 930.5,364.7 931.1,360.4 931.7,364.5 932.4,362.9 933.0,360.5" fill="none" stroke="#9c58c8" stroke-width="1.35" stroke-linejoin="round"/></svg>
<div class="r" style="left:827px;top:386px;width:106px;height:1px;background:#555555;"></div>
<div class="r" style="left:834.7px;top:384px;width:1px;height:2px;background:#555555;"></div>
<div class="r" style="left:865px;top:384px;width:1px;height:2px;background:#555555;"></div>
<div class="r" style="left:895.4px;top:384px;width:1px;height:2px;background:#555555;"></div>
<div class="r" style="left:925.8px;top:384px;width:1px;height:2px;background:#555555;"></div>
<div class="t" style="left:826.70px;top:392.00px;font-size:7.0px;color:#f2f2f2;font-weight:400;-webkit-text-stroke:0.15px #fff;">8. Sep</div>
<div class="t" style="left:853.70px;top:392.00px;font-size:7.0px;color:#f2f2f2;font-weight:400;-webkit-text-stroke:0.15px #fff;">10. Sep</div>
<div class="t" style="left:884.10px;top:392.00px;font-size:7.0px;color:#f2f2f2;font-weight:400;-webkit-text-stroke:0.15px #fff;">12. Sep</div>
<div class="t" style="left:909.90px;top:392.00px;font-size:7.0px;color:#f2f2f2;font-weight:400;-webkit-text-stroke:0.15px #fff;">14. Sep</div>
<div class="t" style="right:24.60px;transform:scaleX(0.96);transform-origin:100% 0;top:362.00px;font-size:14px;color:#ffffff;font-weight:400;-webkit-text-stroke:0.2px #fff;">0.27</div>
<div class="t" style="left:976.30px;top:368.00px;font-size:7.4px;color:#9a9a9a;font-weight:400;">s</div>
<div class="t" style="right:18.80px;top:378.00px;font-size:7.4px;color:#8c8c8c;font-weight:400;">Duration</div>
<svg class="r" style="left:0;top:0" width="998" height="610"><rect x="453.5" y="429.7" width="177" height="176.7" rx="3.5" fill="#1e1e1e" opacity="0.6"/><rect x="454" y="430.2" width="176" height="175.7" rx="3" fill="#333333"/><rect x="454.5" y="430.7" width="175" height="174.7" rx="2.5" fill="none" stroke="#383838" stroke-width="1"/></svg>
<div class="t" style="left:466.70px;top:439.00px;font-size:10.8px;color:#ffffff;font-weight:400;-webkit-text-stroke:0.2px #fff;">HTTP monitor</div>
<div class="r" style="left:540px;top:448px;width:62px;height:1px;background:#3c3c3c;"></div>
<svg class="r" style="left:0;top:0" width="998" height="610"><polyline points="615.00,439.25 617.50,441.75 620.00,439.25" fill="none" stroke="#c8c8c8" stroke-width="1.1"/></svg>
<div class="t" style="left:466.40px;transform:scaleX(0.937);transform-origin:0 0;top:454.00px;font-size:7.0px;color:#e6e6e6;font-weight:400;">FST - GPOATP - Googlemaps Counter</div>
<div class="t" style="left:466.50px;transform:scaleX(0.8);transform-origin:0 0;top:465.00px;font-size:12.4px;color:#ffffff;font-weight:700;">1</div>
<div class="t" style="left:476.70px;top:469.00px;font-size:7.2px;color:#8c8c8c;font-weight:400;">Location</div>
<div class="r" style="left:467px;top:487.3px;width:106px;height:36px;background:#6b3a92;"></div>
<div class="r" style="left:471.8px;top:487.3px;width:1.5px;height:36px;background:#7b4aa3;"></div>
<div class="r" style="left:482.4px;top:487.3px;width:1.5px;height:36px;background:#7b4aa3;"></div>
<div class="r" style="left:493.0px;top:487.3px;width:1.5px;height:36px;background:#7b4aa3;"></div>
<div class="r" style="left:503.6px;top:487.3px;width:1.5px;height:36px;background:#7b4aa3;"></div>
<div class="r" style="left:514.2px;top:487.3px;width:1.5px;height:36px;background:#7b4aa3;"></div>
<div class="r" style="left:524.8px;top:487.3px;width:1.5px;height:36px;background:#7b4aa3;"></div>
<div class="r" style="left:535.4px;top:487.3px;width:1.5px;height:36px;background:#7b4aa3;"></div>
<div class="r" style="left:546.0px;top:487.3px;width:1.5px;height:36px;background:#7b4aa3;"></div>
<div class="r" style="left:556.6px;top:487.3px;width:1.5px;height:36px;background:#7b4aa3;"></div>
<div class="r" style="left:567.2px;top:487.3px;width:1.5px;height:36px;background:#7b4aa3;"></div>
<div class="r" style="left:571.5px;top:487.3px;width:1.5px;height:36px;background:#9a63c6;"></div>
<div class="t" style="right:386.60px;transform:scaleX(0.96);transform-origin:100% 0;top:499.00px;font-size:14px;color:#ffffff;font-weight:400;-webkit-text-stroke:0.2px #fff;">99.66</div>
<div class="t" style="left:613.60px;transform:scaleX(0.9);transform-origin:0 0;top:505.00px;font-size:7.4px;color:#9a9a9a;font-weight:400;">%</div>
<div class="t" style="right:378.80px;top:515.00px;font-size:7.4px;color:#8c8c8c;font-weight:400;">Availability</div>
<div class="t" style="left:466.70px;top:529.00px;font-size:7.0px;color:#f2f2f2;font-weight:400;-webkit-text-stroke:0.15px #fff;">8. Sep</div>
<div class="t" style="left:493.70px;top:529.00px;font-size:7.0px;color:#f2f2f2;font-weight:400;-webkit-text-stroke:0.15px #fff;">10. Sep</div>
<div class="t" style="left:524.10px;top:529.00px;font-size:7.0px;color:#f2f2f2;font-weight:400;-webkit-text-stroke:0.15px #fff;">12. Sep</div>
<div class="t" style="left:549.90px;top:529.00px;font-size:7.0px;color:#f2f2f2;font-weight:400;-webkit-text-stroke:0.15px #fff;">14. Sep</div>
<svg class="r" style="left:0;top:0" width="998" height="610"><polyline points="467.0,579.7 467.6,581.6 468.3,581.2 468.9,582.3 469.5,582.1 470.1,581.9 470.8,583.0 471.4,582.5 472.0,581.7 472.6,583.1 473.3,583.1 473.9,583.2 474.5,581.4 475.2,583.1 475.8,581.4 476.4,582.7 477.0,583.5 477.7,581.7 478.3,582.1 478.9,578.2 479.5,573.4 480.2,581.1 480.8,581.3 481.4,582.6 482.1,582.6 482.7,583.3 483.3,581.5 483.9,581.9 484.6,582.4 485.2,581.7 485.8,581.3 486.4,581.2 487.1,583.4 487.7,581.9 488.3,582.1 489.0,582.8 489.6,583.0 490.2,583.6 490.8,583.6 491.5,582.8 492.1,582.3 492.7,583.1 493.3,582.3 494.0,582.2 494.6,583.0 495.2,582.4 495.9,581.4 496.5,582.6 497.1,581.8 497.7,583.4 498.4,582.2 499.0,582.7 499.6,582.3 500.2,581.5 500.9,581.9 501.5,582.0 502.1,583.5 502.8,582.1 503.4,582.0 504.0,582.4 504.6,583.4 505.3,581.2 505.9,579.8 506.5,581.5 507.1,582.1 507.8,582.9 508.4,583.5 509.0,582.2 509.7,583.2 510.3,582.3 510.9,582.1 511.5,582.7 512.2,581.5 512.8,581.4 513.4,582.7 514.0,583.4 514.7,582.9 515.3,583.2 515.9,582.7 516.6,583.4 517.2,577.8 517.8,567.4 518.4,577.9 519.1,582.3 519.7,582.3 520.3,581.3 520.9,583.5 521.6,583.5 522.2,583.3 522.8,583.5 523.4,583.2 524.1,583.2 524.7,582.1 525.3,580.1 526.0,583.0 526.6,582.9 527.2,581.4 527.8,581.5 528.5,582.3 529.1,580.3 529.7,581.3 530.3,581.6 531.0,581.6 531.6,582.1 532.2,581.7 532.9,583.4 533.5,581.6 534.1,581.8 534.7,583.1 535.4,581.7 536.0,582.1 536.6,582.2 537.2,582.5 537.9,582.9 538.5,583.1 539.1,582.8 539.8,563.8 540.4,552.3 541.0,583.0 541.6,582.9 542.3,581.0 542.9,583.1 543.5,582.6 544.1,581.9 544.8,582.9 545.4,581.6 546.0,581.5 546.7,581.7 547.3,583.0 547.9,582.3 548.5,578.2 549.2,579.9 549.8,583.1 550.4,581.7 551.0,581.8 551.7,583.0 552.3,582.9 552.9,583.1 553.6,581.9 554.2,581.5 554.8,581.3 555.4,583.5 556.1,582.9 556.7,581.2 557.3,583.2 557.9,582.6 558.6,581.5 559.2,581.6 559.8,582.1 560.5,582.6 561.1,582.4 561.7,580.7 562.3,577.5 563.0,581.1 563.6,583.5 564.2,582.4 564.8,582.6 565.5,583.3 566.1,581.4 566.7,578.0 567.4,580.7 568.0,583.4 568.6,583.3 569.2,581.8 569.9,582.1 570.5,581.5 571.1,581.4 571.7,583.0 572.4,581.4 573.0,581.5" fill="none" stroke="#9c58c8" stroke-width="1.35" stroke-linejoin="round"/></svg>
<div class="r" style="left:467px;top:588.3px;width:106px;height:1px;background:#555555;"></div>
<div class="r" style="left:474.7px;top:586.3px;width:1px;height:2px;background:#555555;"></div>
<div class="r" style="left:505px;top:586.3px;width:1px;height:2px;background:#555555;"></div>
<div class="r" style="left:535.4px;top:586.3px;width:1px;height:2px;background:#555555;"></div>
<div class="r" style="left:565.8px;top:586.3px;width:1px;height:2px;background:#555555;"></div>
<div class="t" style="left:466.70px;top:594.00px;font-size:7.0px;color:#f2f2f2;font-weight:400;-webkit-text-stroke:0.15px #fff;">8. Sep</div>
<div class="t" style="left:493.70px;top:594.00px;font-size:7.0px;color:#f2f2f2;font-weight:400;-webkit-text-stroke:0.15px #fff;">10. Sep</div>
<div class="t" style="left:524.10px;top:594.00px;font-size:7.0px;color:#f2f2f2;font-weight:400;-webkit-text-stroke:0.15px #fff;">12. Sep</div>
<div class="t" style="left:549.90px;top:594.00px;font-size:7.0px;color:#f2f2f2;font-weight:400;-webkit-text-stroke:0.15px #fff;">14. Sep</div>
<div class="t" style="right:384.60px;transform:scaleX(0.96);transform-origin:100% 0;top:564.00px;font-size:14px;color:#ffffff;font-weight:400;-webkit-text-stroke:0.2px #fff;">0.31</div>
<div class="t" style="left:616.30px;top:570.00px;font-size:7.4px;color:#9a9a9a;font-weight:400;">s</div>
<div class="t" style="right:378.80px;top:580.00px;font-size:7.4px;color:#8c8c8c;font-weight:400;">Duration</div>
</body></html>
